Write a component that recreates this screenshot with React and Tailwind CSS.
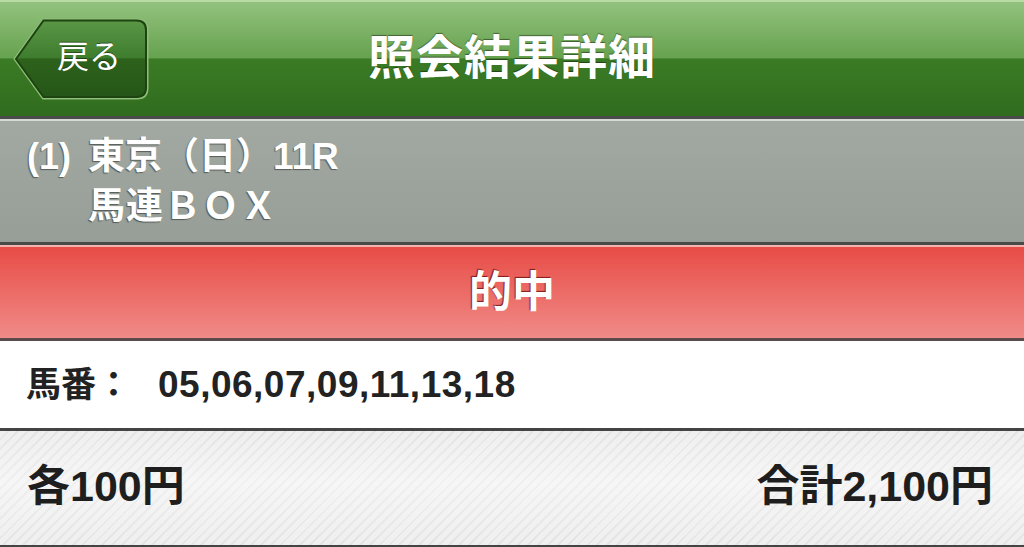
import React from 'react';

const jp = { fontFamily: '"Liberation Sans", "Noto Sans CJK JP", sans-serif' };

const BackButton = () => (
  <button className="relative w-[136px] h-[82px] flex items-center justify-start">
    <svg width="136" height="82" viewBox="0 0 136 82" className="absolute inset-0">
      <defs>
        <linearGradient id="bb" x1="0" y1="0" x2="0" y2="1">
          <stop offset="0%" stopColor="#5a9646" />
          <stop offset="49%" stopColor="#3f7d2e" />
          <stop offset="50%" stopColor="#2d621b" />
          <stop offset="100%" stopColor="#255618" />
        </linearGradient>
      </defs>
      <path d="M30 1.5 L124 1.5 Q134.5 1.5 134.5 12 L134.5 70 Q134.5 80.5 124 80.5 L30 80.5 L1.5 41 Z" fill="none" stroke="#8fbe7a" strokeWidth="2" />
      <path d="M30.5 2.5 L123.5 2.5 Q133 2.5 133 12 L133 69.5 Q133 79 123.5 79 L30.5 79 L3 41 Z" fill="url(#bb)" stroke="#1d4410" strokeWidth="2" />
    </svg>
    <span className="relative pl-[44px] pb-[5px] text-[32px] text-white leading-none [text-shadow:0_-1px_0_rgba(0,0,0,0.4)]" style={jp}>戻る</span>
  </button>
);

export default function App() {
  return (
    <div className="w-[1024px] h-[547px] overflow-hidden bg-white" style={jp}>
      {/* header */}
      <div className="h-[116px] border-t-2 border-[#b7dba3] bg-[linear-gradient(to_bottom,#93c27e_0%,#66a24f_49%,#3b7b25_50%,#306c1e_100%)] grid grid-cols-[1fr_auto_1fr] items-center">
        <div className="pl-[13px]">
          <BackButton />
        </div>
        <h1 className="text-[47px] font-bold text-white leading-none tracking-[1px] [text-shadow:0_-1px_1px_rgba(0,0,0,0.45)] pb-[4px]">照会結果詳細</h1>
        <div />
      </div>
      <div className="h-[3px] bg-[#4a4d4a]" />
      <div className="h-[2px] bg-[#d6dad6]" />

      {/* race info */}
      <div className="h-[121px] bg-[linear-gradient(to_bottom,#a2a9a2,#969e97)] pl-[27px] pt-[11px] text-white font-bold leading-[50px] [text-shadow:-1px_1px_1px_rgba(0,0,0,0.45)]">
        <div className="flex items-baseline">
          <span className="w-[61px] text-[36px]">(1)</span>
          <span className="text-[37px]">東京（日）11R</span>
        </div>
        <div className="flex items-baseline">
          <span className="w-[61px]" />
          <span className="text-[37px] tracking-[1px]">馬連ＢＯＸ</span>
        </div>
      </div>
      <div className="h-[3px] bg-[#474a47]" />
      <div className="h-[2px] bg-[#f4b3b0]" />

      {/* result */}
      <div className="h-[91px] bg-[linear-gradient(to_bottom,#e84c46,#f08b88)] flex items-center justify-center">
        <span className="text-[43px] font-bold text-white leading-none [text-shadow:-1px_-1px_1px_rgba(90,0,0,0.75)]">的中</span>
      </div>
      <div className="h-[3px] bg-[#5a4a4a]" />

      {/* horse numbers */}
      <div className="h-[87px] bg-white flex items-center pl-[26px] text-[#222] font-bold">
        <span className="text-[35px] leading-none w-[132px]">馬番：</span>
        <span className="text-[37px] leading-none tracking-[0.5px]">05,06,07,09,11,13,18</span>
      </div>
      <div className="h-[3px] bg-[#444]" />

      {/* amount */}
      <div className="h-[114px] bg-[linear-gradient(to_bottom,rgba(255,255,255,0)_0%,rgba(255,255,255,0.45)_45%,rgba(255,255,255,0)_100%),repeating-linear-gradient(135deg,#efefef_0px,#efefef_5px,#e4e4e4_5px,#e4e4e4_7px)] flex items-center justify-between px-[27px] pb-[3px] text-[#1e1e1e] font-bold leading-none">
        <span className="text-[43px]">各100円</span>
        <span className="text-[43px] pr-[4px]">合計2,100円</span>
      </div>
      <div className="h-[4px] bg-[#444]" />
    </div>
  );
}
